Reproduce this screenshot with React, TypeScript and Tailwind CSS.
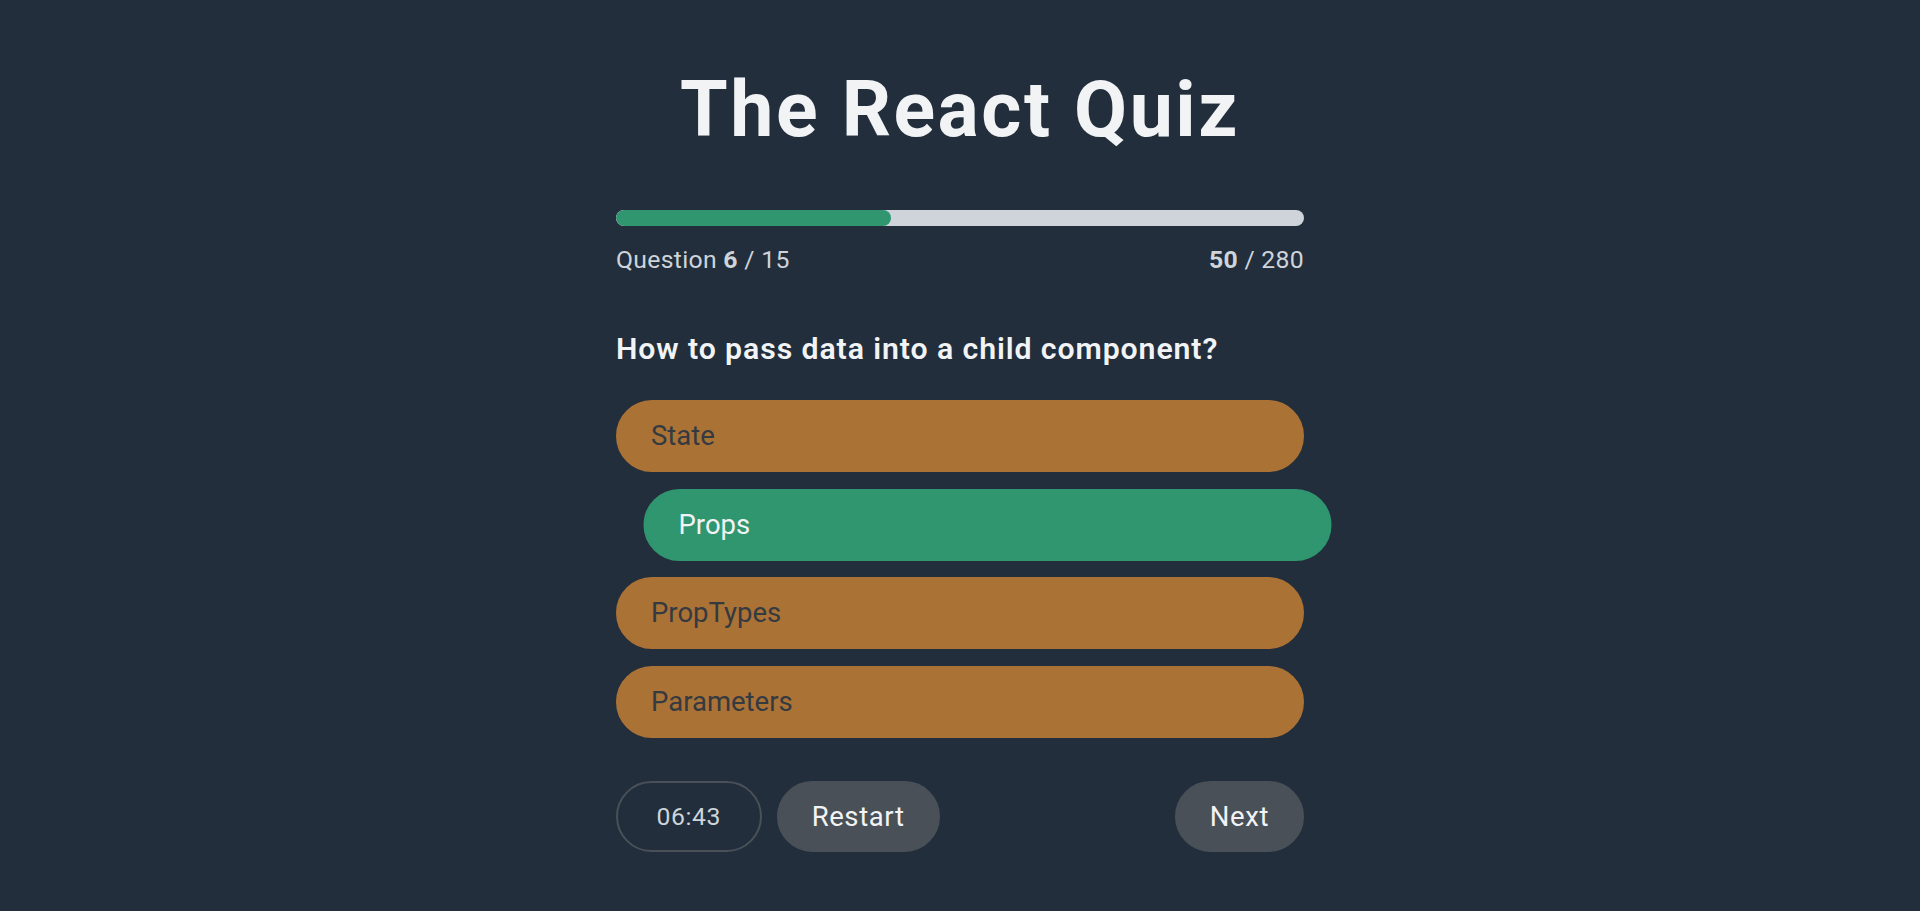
import React from 'react';

const options = ['State', 'Props', 'PropTypes', 'Parameters'];
const correct = 1;

export default function App() {
  return (
    <div
      className="min-h-screen bg-[#222e3c] text-[#f1f3f5] flex flex-col items-center"
      style={{ fontFamily: 'Roboto, "Noto Sans", sans-serif' }}
    >
      <header className="pt-[72px] mb-[61px]">
        <h1 className="text-[77px] leading-none font-bold tracking-[2.5px] text-[#f1f3f5]">
          The React Quiz
        </h1>
      </header>

      <main className="w-[688px]">
        <div className="grid grid-cols-[auto_auto] justify-between gap-y-4 mb-[53px] text-[24.75px] leading-9 tracking-[0.3px] text-[#ced4da]">
          <div className="col-span-2 h-4 rounded-full bg-[#ced4da] overflow-hidden">
            <div className="h-full w-[40%] rounded-full bg-[#2f966f]" />
          </div>
          <p>
            Question <strong className="font-bold">6</strong> / 15
          </p>
          <p>
            <strong className="font-bold">50</strong> / 280
          </p>
        </div>

        <h4 className="text-[30.25px] leading-9 font-semibold tracking-[0.9px] mb-[33px]">
          How to pass data into a child component?
        </h4>

        <div className="flex flex-col gap-[16.5px] mb-[43.5px]">
          {options.map((opt, i) => (
            <button
              key={opt}
              className={
                i === correct
                  ? 'h-[72px] w-full rounded-full px-[33px] text-left text-[27.5px] border-[2.75px] border-[#2f966f] bg-[#2f966f] text-[#f1f3f5] translate-x-[27.5px]'
                  : 'h-[72px] w-full rounded-full px-[33px] text-left text-[27.5px] border-[2.75px] border-[#ab7236] bg-[#ab7236] text-[#343a40]'
              }
            >
              {opt}
            </button>
          ))}
        </div>

        <div className="flex items-center">
          <div className="h-[71px] flex items-center rounded-full border-[2.75px] border-[#495057] px-[38.5px] text-[24.75px] tracking-[0.6px] text-[#ced4da]">
            06:43
          </div>
          <button className="ml-[15px] h-[71px] rounded-full border-[2.75px] border-[#495057] bg-[#495057] px-[33px] text-[27.5px] tracking-[0.6px] text-[#f1f3f5]">
            Restart
          </button>
          <button className="ml-auto h-[71px] rounded-full border-[2.75px] border-[#495057] bg-[#495057] px-[33px] text-[27.5px] tracking-[0.6px] text-[#f1f3f5]">
            Next
          </button>
        </div>
      </main>
    </div>
  );
}
